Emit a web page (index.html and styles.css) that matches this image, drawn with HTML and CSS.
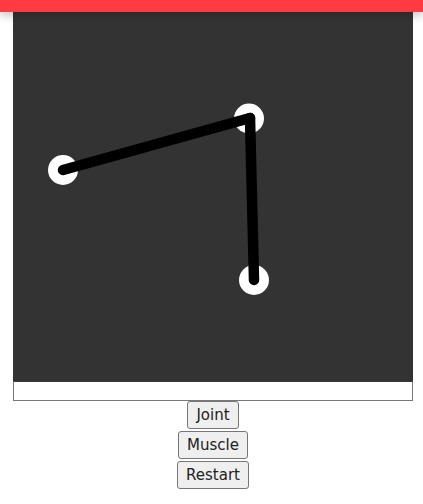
FILE: index.html
```html
<!DOCTYPE html>
<html>
<head>
<meta charset="utf-8">
<link rel="stylesheet" href="styles.css">
</head>
<body>
<header class="topbar"></header>
<main class="stage">
  <svg class="canvas" width="400" height="369" viewBox="0 0 400 369">
    <rect width="400" height="369" fill="#333333"/>
    <circle cx="50" cy="158" r="15" fill="#ffffff"/>
    <circle cx="236" cy="106.5" r="15" fill="#ffffff"/>
    <circle cx="241" cy="268" r="15" fill="#ffffff"/>
    <line x1="50" y1="158" x2="237" y2="106" stroke="#000" stroke-width="10.5" stroke-linecap="round"/>
    <line x1="237" y1="106" x2="241" y2="268" stroke="#000" stroke-width="10.5" stroke-linecap="round"/>
  </svg>
  <div class="info"></div>
  <div class="controls">
    <button class="btn">Joint</button>
    <button class="btn">Muscle</button>
    <button class="btn">Restart</button>
  </div>
</main>
</body>
</html>
```

FILE: styles.css
```css
html, body {
  margin: 0;
  padding: 0;
  background: #ffffff;
}
body {
  font-family: "DejaVu Sans", sans-serif;
}
.topbar {
  position: relative;
  z-index: 2;
  height: 12px;
  background: #ff3a40;
  box-shadow: 0 3px 10px rgba(0, 0, 0, 0.25);
}
.stage {
  width: 400px;
  margin: 0 10px 0 13px;
}
.canvas {
  display: block;
}
.info {
  height: 18px;
  border: 1px solid #777777;
  border-top: 1px solid #3a3a3a;
}
.controls {
  display: flex;
  flex-direction: column;
  align-items: center;
  gap: 2px;
}
.btn {
  font-family: "DejaVu Sans", sans-serif;
  font-size: 15px;
  color: #222222;
  background: #efefef;
  border: 1px solid #767676;
  border-radius: 3px;
  height: 28px;
  padding: 0 8px;
  line-height: 26px;
}
```
